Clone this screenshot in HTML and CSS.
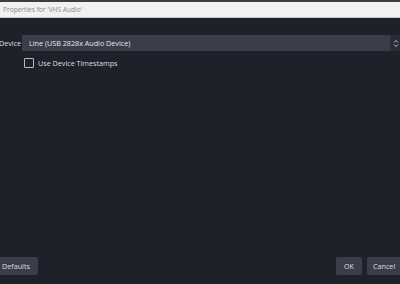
FILE: index.html
```html
<!DOCTYPE html>
<html>
<head>
<meta charset="utf-8">
<link rel="stylesheet" href="styles.css">
</head>
<body>
<div class="window">
  <div class="topstrip"></div>
  <div class="titlebar">Properties for 'VHS Audio'</div>
  <div class="content">
    <div class="row">
      <span class="label">Device</span>
      <div class="combo">
        <span class="combo-text">Line (USB 2828x Audio Device)</span>
        <span class="spin">
          <svg width="6" height="9" viewBox="0 0 6 9"><path d="M1 3.5 L3 1.5 L5 3.5 M1 5.5 L3 7.5 L5 5.5" fill="none" stroke="#c8cad0" stroke-width="1"/></svg>
        </span>
      </div>
    </div>
    <label class="check-row">
      <span class="checkbox"></span>
      <span class="check-text">Use Device Timestamps</span>
    </label>
  </div>
  <div class="footer">
    <button class="btn defaults">Defaults</button>
    <div class="right-btns">
      <button class="btn ok">OK</button>
      <button class="btn cancel">Cancel</button>
    </div>
  </div>
</div>
</body>
</html>
```

FILE: styles.css
```css
html, body {
  margin: 0;
  padding: 0;
  width: 400px;
  height: 284px;
  overflow: hidden;
  background: #1f212a;
  font-family: "Open Sans", "Noto Sans", sans-serif;
}
.window {
  display: flex;
  flex-direction: column;
  width: 400px;
  height: 284px;
}
.topstrip {
  height: 2px;
  background: #3c3d47;
}
.titlebar {
  height: 15px;
  background: #f1f1f1;
  border-bottom: 1px solid #c9c9cc;
  color: #8a8a8a;
  font-size: 6.6px;
  line-height: 15px;
  padding-left: 3px;
  white-space: nowrap;
}
.content {
  flex: 1;
  padding-top: 17px;
}
.row {
  display: flex;
  align-items: center;
  height: 16px;
}
.label {
  width: 21px;
  margin-left: -1px;
  color: #dcdde0;
  font-size: 7.2px;
  text-align: right;
  white-space: nowrap;
}
.combo {
  flex: 1;
  display: flex;
  align-items: center;
  height: 16px;
  background: #3b3e4a;
  margin-left: 2px;
}
.combo-text {
  flex: 1;
  color: #e4e5e8;
  font-size: 7.2px;
  padding-left: 7px;
  white-space: nowrap;
}
.spin {
  width: 9px;
  height: 16px;
  display: flex;
  align-items: center;
  justify-content: center;
  background: #2a2c35;
  border-left: 1px solid #30323b;
}
.check-row {
  display: flex;
  align-items: center;
  margin-top: 6px;
  margin-left: 24px;
  height: 11px;
}
.checkbox {
  width: 8px;
  height: 8px;
  border: 1px solid #b8bac0;
  border-radius: 1px;
  box-sizing: content-box;
}
.check-text {
  margin-left: 4px;
  color: #dcdde0;
  font-size: 7.2px;
  white-space: nowrap;
}
.footer {
  display: flex;
  justify-content: space-between;
  align-items: center;
  height: 18px;
  margin-bottom: 9px;
}
.btn {
  font-family: inherit;
  border: none;
  background: #3b3e4a;
  color: #dcdde0;
  font-size: 7.2px;
  height: 18px;
  padding: 0;
  border-radius: 2px;
  cursor: default;
}
.defaults {
  width: 38px;
  margin-left: 0;
  padding-left: 2px;
  text-align: left;
  border-radius: 0 2px 2px 0;
}
.right-btns {
  display: flex;
  gap: 5px;
}
.ok {
  width: 26px;
}
.cancel {
  width: 36px;
  margin-right: -3px;
  padding-left: 6px;
  text-align: left;
}
```
